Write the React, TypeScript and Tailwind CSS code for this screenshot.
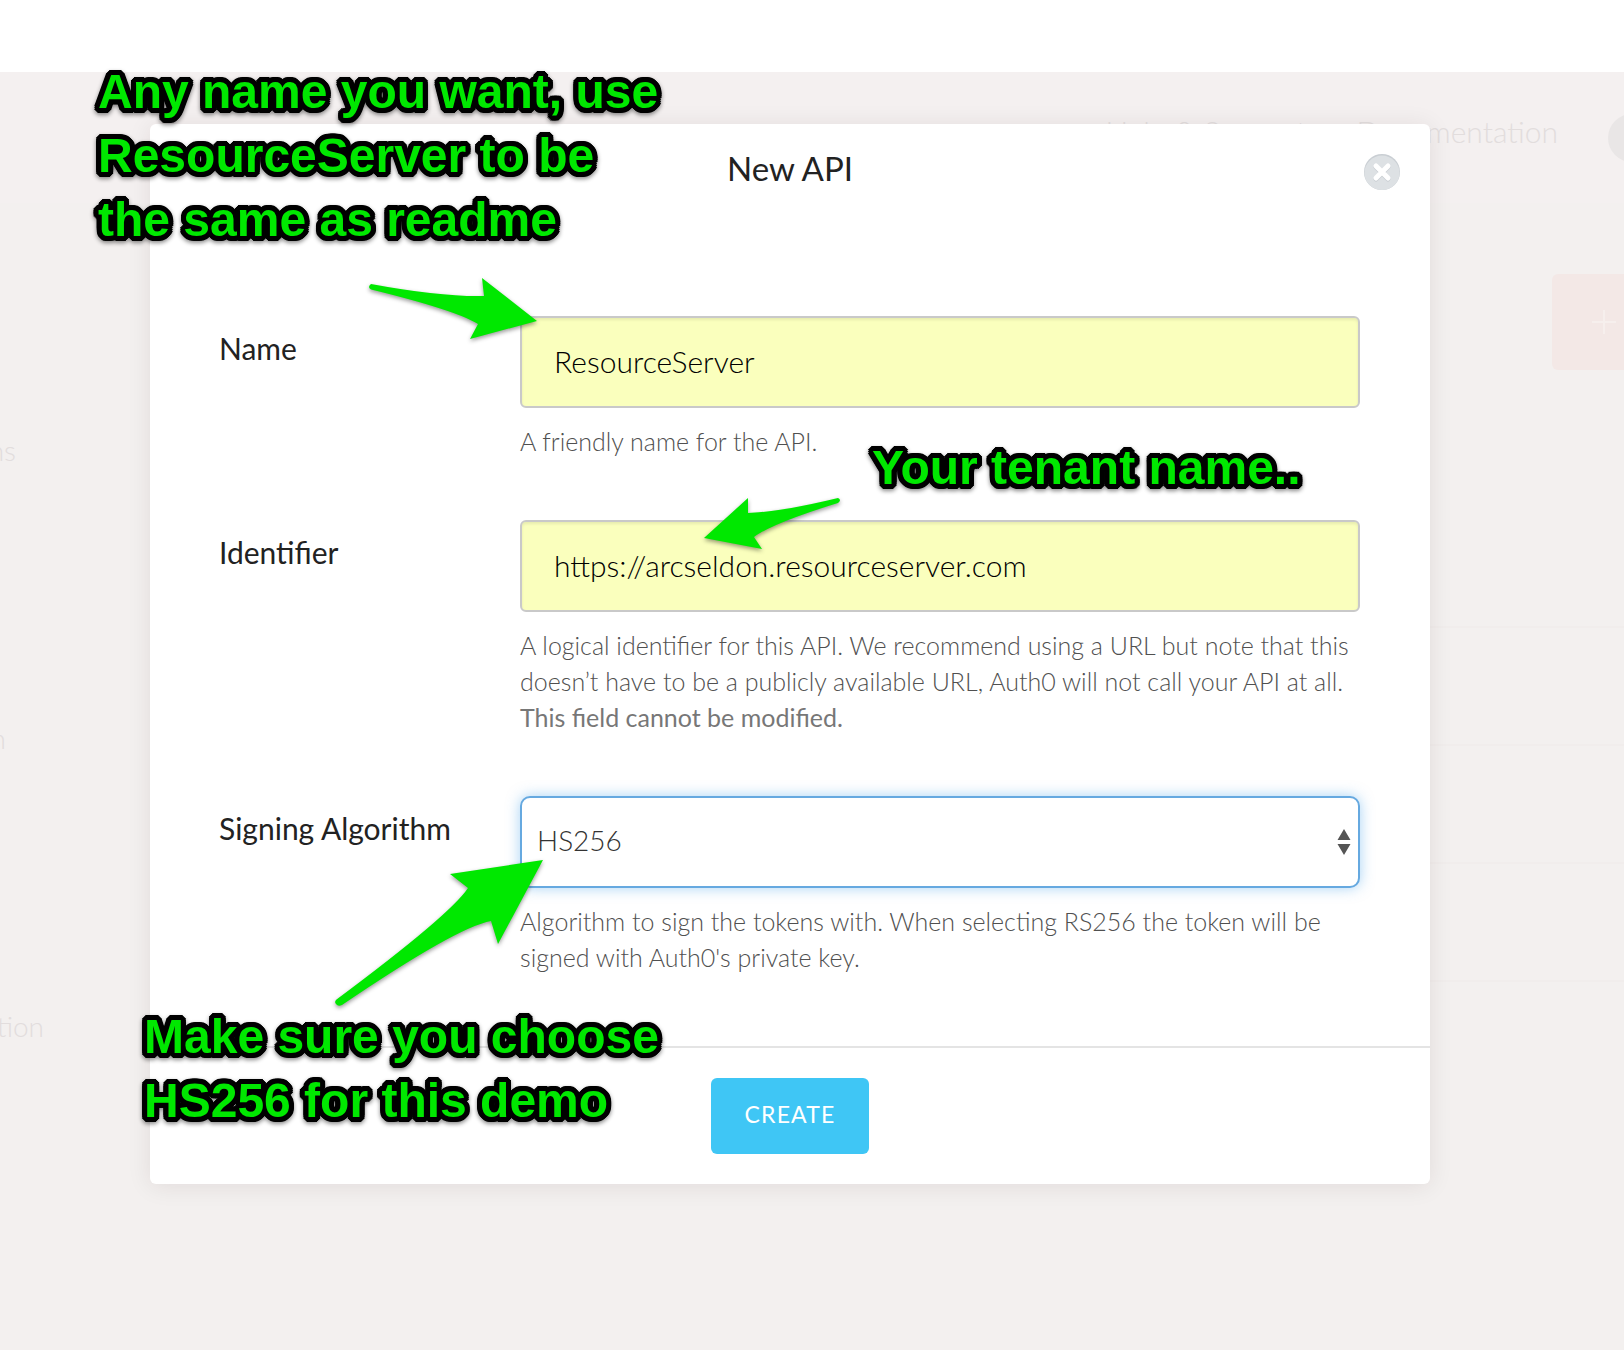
import type { ReactNode } from "react";

const helpText = "mt-[15px] pb-px text-[25px] leading-9 font-light text-[#505050]";
const label = "pt-3 text-[30px] leading-10 text-[#222]";
const autofilled =
  "block h-[92px] w-full rounded-md border-2 border-[#c9c9c9] bg-[#faffbd] px-8 pb-0.5 text-[30px] font-light text-black shadow-[inset_0_2px_3px_rgba(0,0,0,0.08)] outline-none";
const arrow = "pointer-events-none absolute overflow-visible fill-[#00e800] drop-shadow-[0_2px_2px_rgba(0,0,0,0.4)]";
const outline =
  "[text-shadow:5px_0_#000,5px_2px_#000,4px_3px_#000,3px_4px_#000,2px_5px_#000,0_5px_#000,-2px_5px_#000,-3px_4px_#000,-4px_3px_#000,-5px_2px_#000,-5px_0_#000,-5px_-2px_#000,-4px_-3px_#000,-3px_-4px_#000,-2px_-5px_#000,0_-5px_#000,2px_-5px_#000,3px_-4px_#000,4px_-3px_#000,5px_-2px_#000]";

function Note({ className, lines }: { className: string; lines: string[] }) {
  return (
    <p
      className={`absolute whitespace-nowrap font-['Liberation_Sans',sans-serif] text-[48px] leading-[64px] font-bold text-[#00e800] drop-shadow-[0_2px_2px_rgba(0,0,0,0.45)] ${outline} ${className}`}
    >
      {lines.map((line) => (
        <span key={line} className="block">
          {line}
        </span>
      ))}
    </p>
  );
}

function Field({ id, title, help, children }: { id: string; title: string; help: ReactNode; children: ReactNode }) {
  return (
    <div className="grid grid-cols-[301px_1fr]">
      <label htmlFor={id} className={label}>
        {title}
      </label>
      <div>
        {children}
        <p className={helpText}>{help}</p>
      </div>
    </div>
  );
}

function Backdrop() {
  return (
    <div className="col-start-1 row-start-1 flex flex-col overflow-hidden bg-[#f4f0f0] text-[28px] font-light text-[#e2dddd]">
      <div className="h-18 bg-white" />
      <header className="flex h-[131px] items-center justify-end">
        <nav className="-mr-8 flex items-center gap-[50px] text-[30px]">
          <span className="pb-3">Help &amp; Support</span>
          <span className="pb-3">Documentation</span>
          <span className="size-12 rounded-full bg-[#e9e6e6]" />
        </nav>
      </header>
      <div className="flex grow justify-between bg-[#f3f0ef]">
        <ul className="flex w-11 flex-col gap-[248px] pt-[227px] leading-10">
          <li className="flex w-4 justify-end">ns</li>
          <li className="flex w-1.5 justify-end">n</li>
          <li className="flex justify-end">tion</li>
        </ul>
        <div className="flex w-[224px] flex-col pt-[71px]">
          <div className="flex h-24 w-[72px] items-center self-end rounded-l-md bg-[#f3e8e6] pl-10">
            <svg viewBox="0 0 24 24" className="size-6 shrink-0 stroke-[#f6efed]" strokeWidth="2" aria-hidden="true">
              <path d="M12 0v24M0 12h24" />
            </svg>
          </div>
          <div className="mt-[256px] flex flex-col">
            <div className="h-[118px] border-t-2 border-[#f1edec]" />
            <div className="h-[118px] border-t-2 border-[#f1edec]" />
            <div className="h-[118px] border-t-2 border-[#f1edec]" />
            <div className="border-t-2 border-[#f1edec]" />
          </div>
        </div>
      </div>
    </div>
  );
}

export default function App() {
  return (
    <main className="relative grid min-h-screen overflow-hidden font-['Lato',sans-serif]">
      <Backdrop />

      <section
        role="dialog"
        aria-labelledby="dialog-title"
        className="relative col-start-1 row-start-1 mt-[124px] mr-[194px] ml-[150px] self-start rounded-md bg-white shadow-[0_2px_24px_rgba(40,0,20,0.09)]"
      >
        <header className="flex h-[88px] items-center justify-center">
          <h1 id="dialog-title" className="text-[33px] leading-10 text-[#222]">
            New API
          </h1>
          <button type="button" aria-label="Close" className="absolute top-[30px] right-[30px] size-9">
            <svg viewBox="0 0 36 36" className="size-9" aria-hidden="true">
              <circle cx="18" cy="18" r="18" fill="#c9ced3" />
              <ellipse cx="18" cy="18.8" rx="17.6" ry="17.2" fill="#dde1e4" />
              <path d="M12 13l12 12M24 13L12 25" stroke="#c9ced3" strokeWidth="5" strokeLinecap="round" />
              <path d="M12 12l12 12M24 12L12 24" stroke="#fff" strokeWidth="5" strokeLinecap="round" />
            </svg>
          </button>
        </header>

        <form>
          <div className="flex flex-col gap-15 pt-[104px] pr-[70px] pb-[70px] pl-[69px]">
            <Field id="name" title="Name" help="A friendly name for the API.">
              <input id="name" type="text" defaultValue="ResourceServer" className={autofilled} />
            </Field>
            <Field
              id="identifier"
              title="Identifier"
              help={
                <>
                  A logical identifier for this API. We recommend using a URL but note that this
                  <br />
                  doesn’t have to be a publicly available URL, Auth0 will not call your API at all.
                  <br />
                  <strong className="text-[#777]">This field cannot be modified.</strong>
                </>
              }
            >
              <input
                id="identifier"
                type="text"
                defaultValue="https://arcseldon.resourceserver.com"
                className={autofilled}
              />
            </Field>
            <Field
              id="algorithm"
              title="Signing Algorithm"
              help={
                <>
                  Algorithm to sign the tokens with. When selecting RS256 the token will be
                  <br />
                  signed with Auth0's private key.
                </>
              }
            >
              <div className="relative">
                <select
                  id="algorithm"
                  defaultValue="HS256"
                  className="block h-[92px] w-full appearance-none rounded-[10px] border-2 border-[#66a9e0] bg-white px-[15px] pb-1 text-[28px] font-light text-[#333] shadow-[0_0_14px_rgba(82,168,236,0.5)] outline-none"
                >
                  <option>HS256</option>
                  <option>RS256</option>
                </select>
                <svg
                  viewBox="0 0 14 26"
                  className="pointer-events-none absolute top-[33px] right-[9px] h-[26px] w-3.5 fill-[#555]"
                  aria-hidden="true"
                >
                  <path d="M7 0l6.500 11H.5zM.5 15h13L7 26z" />
                </svg>
              </div>
            </Field>
          </div>
          <footer className="flex justify-center border-t-2 border-[#e4e4e4] py-[30px]">
            <button
              type="submit"
              className="h-[76px] rounded-md bg-[#3fc6f5] px-[34px] pb-1 text-[23px] tracking-wider text-white"
            >
              CREATE
            </button>
          </footer>
        </form>
      </section>

      <Note className="top-[60px] left-[98px]" lines={["Any name you want, use", "ResourceServer to be", "the same as readme"]} />
      <Note className="top-[436px] left-[872px]" lines={["Your tenant name.."]} />
      <Note className="top-[1005px] left-[144px]" lines={["Make sure you choose", "HS256 for this demo"]} />

      <svg viewBox="369 278 168 62" className={`${arrow} top-[278px] left-[369px] h-[62px] w-[168px]`} aria-hidden="true">
        <path d="M371 284Q441 297 484 296L482 278L537 321L470 339L478 324Q455 310 371 289.500Q367 287 371 284Z" />
      </svg>
      <svg viewBox="704 498 136 52" className={`${arrow} top-[498px] left-[704px] h-[52px] w-[136px]`} aria-hidden="true">
        <path d="M838 498Q780 512 748 513L748 498L704 538L762 549L754 537Q773 523 838 503Q842 500 838 498Z" />
      </svg>
      <svg viewBox="335 860 208 147" className={`${arrow} top-[860px] left-[335px] h-[147px] w-[208px]`} aria-hidden="true">
        <path d="M336.500 999.500Q450 915 468 888L450 874L543 860L498 944L491 921Q457 927 342 1005Q338 1007 336 1004Q334 1002 336.500 999.500Z" />
      </svg>
    </main>
  );
}
